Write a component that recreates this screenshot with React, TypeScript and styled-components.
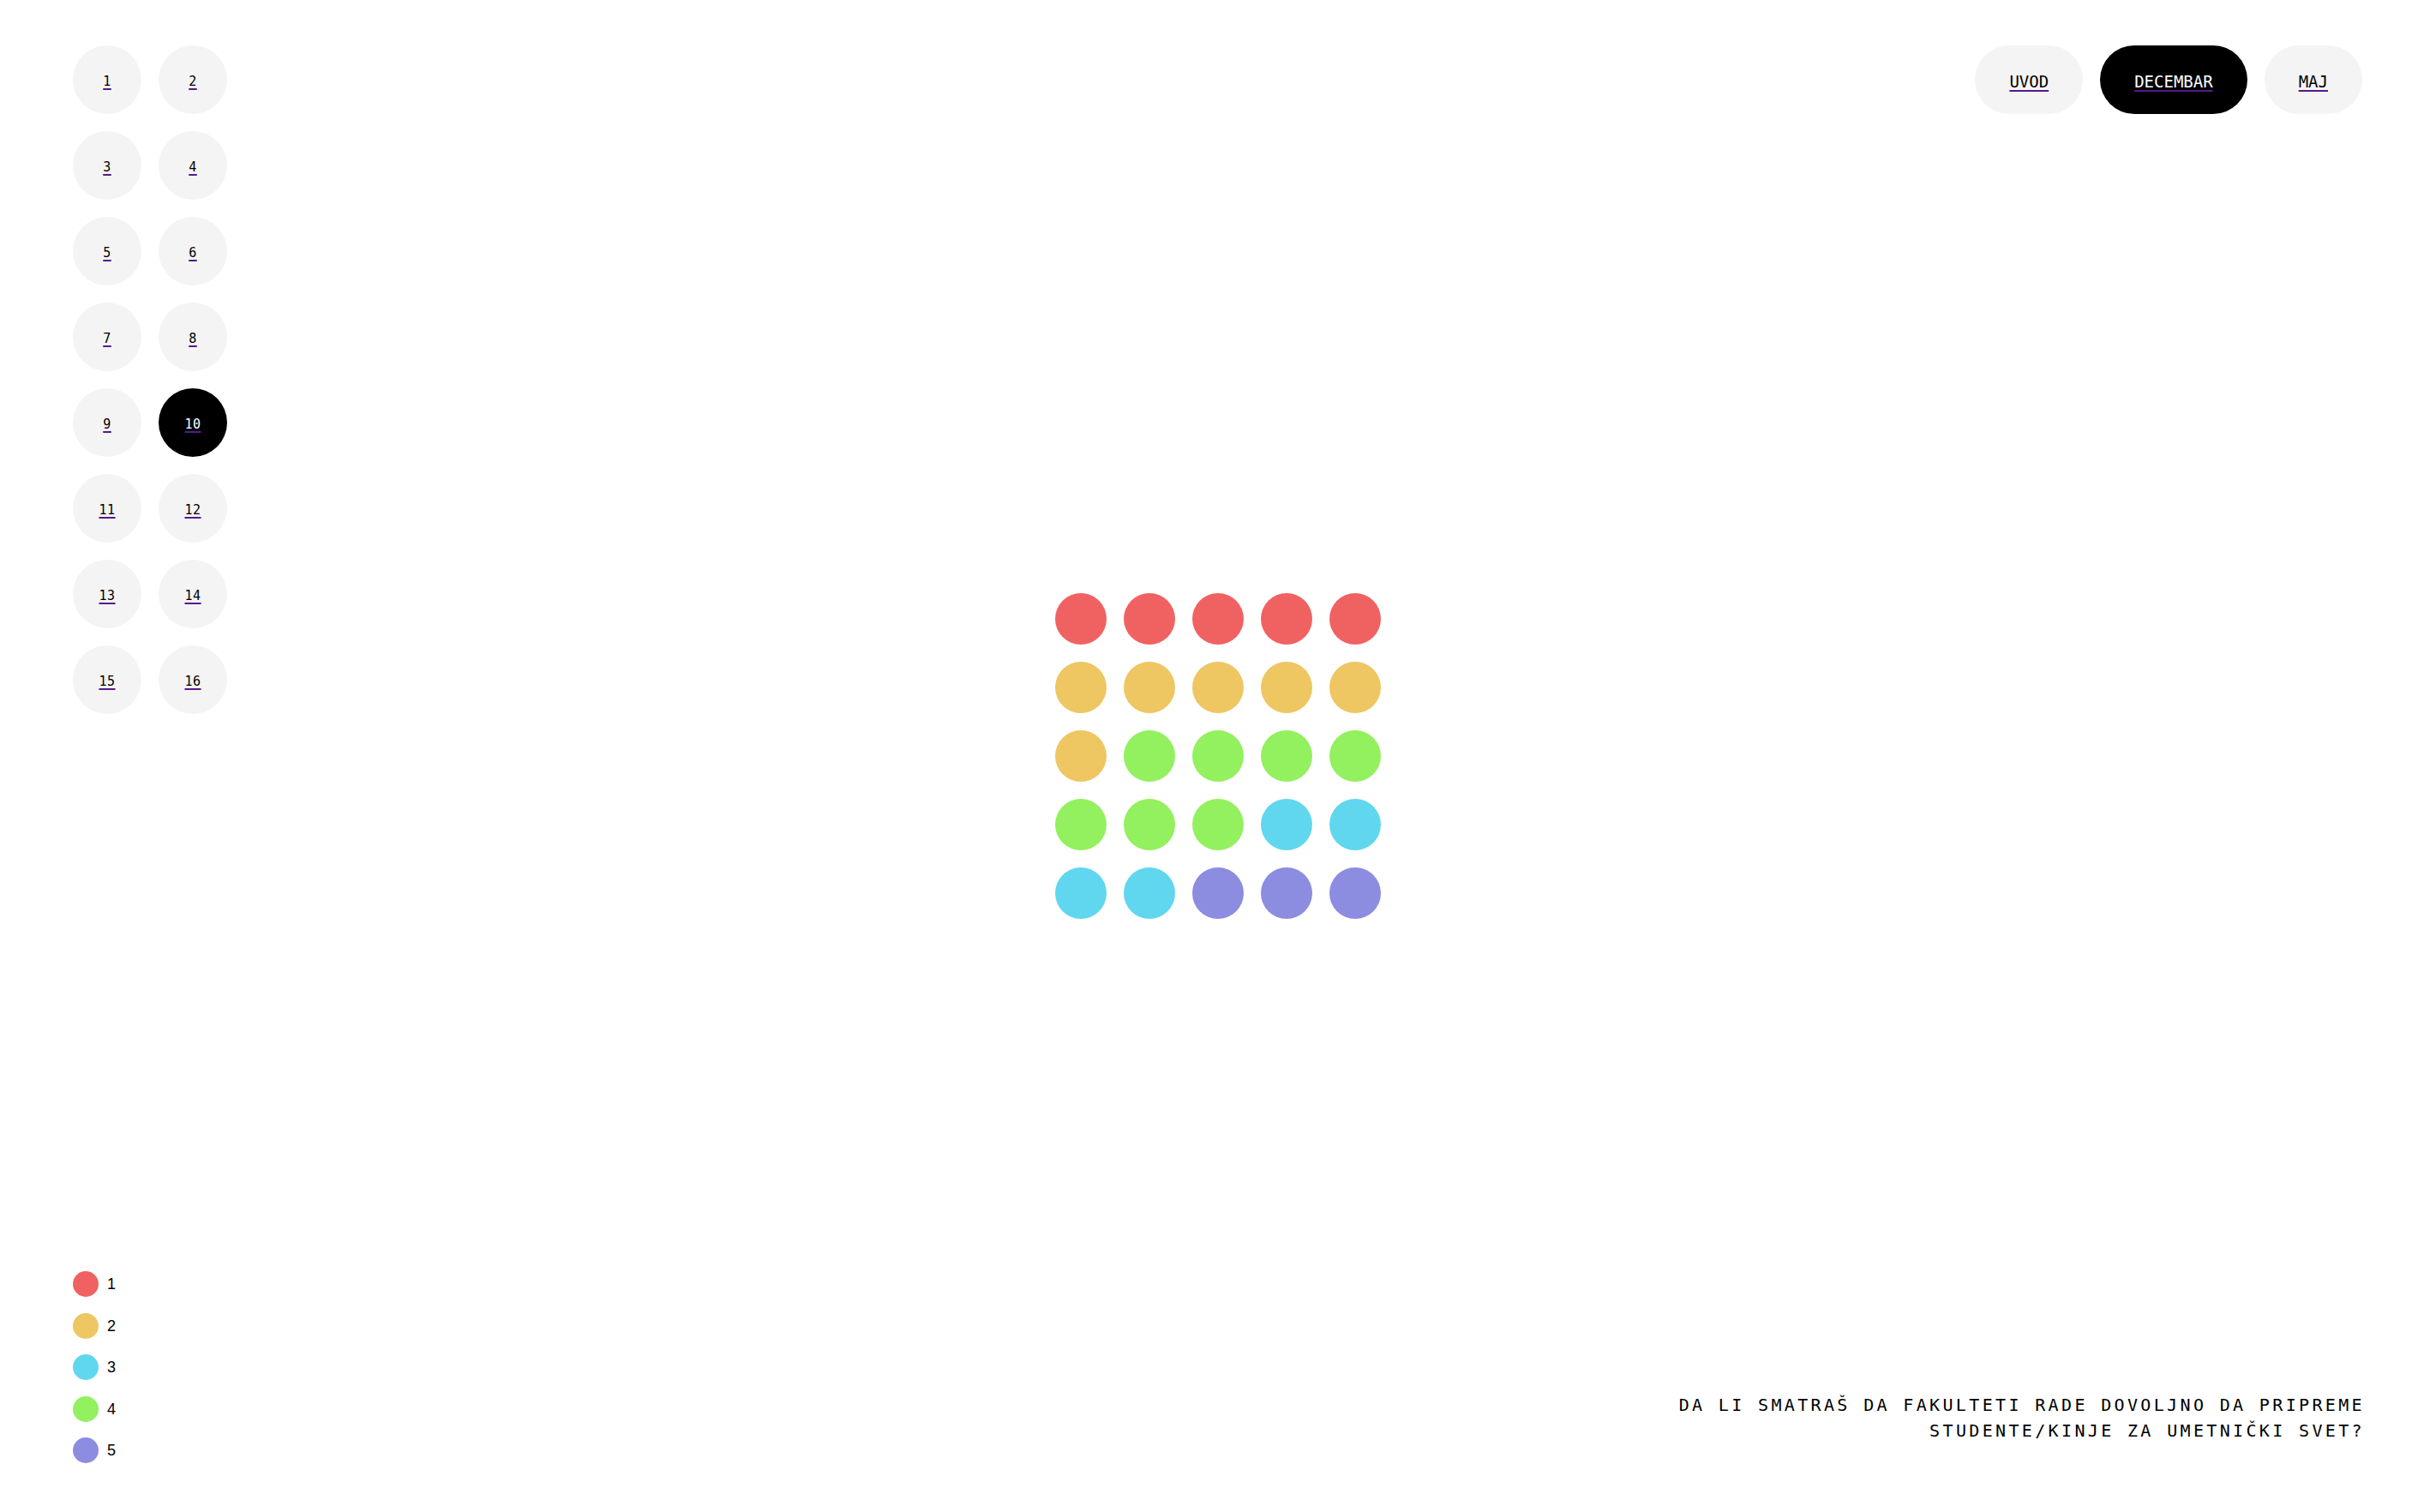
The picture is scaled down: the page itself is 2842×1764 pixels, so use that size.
import React from "react";
import styled, { createGlobalStyle } from "styled-components";

import type { FC } from "react";

const GlobalStyle = createGlobalStyle`
  html, body {
    margin: 0;
    padding: 0;
    background: #ffffff;
  }
  body {
    font-family: "DejaVu Sans Mono", "Liberation Mono", monospace;
    color: #000;
  }
`;

const COLORS: Record<number, string> = {
  1: "#f06261",
  2: "#eec662",
  3: "#60d7ee",
  4: "#93f05f",
  5: "#8c8ce1",
};

// answers as they are laid out in the chart
const ANSWERS = [
  1, 1, 1, 1, 1,
  2, 2, 2, 2, 2,
  2, 4, 4, 4, 4,
  4, 4, 4, 3, 3,
  3, 3, 5, 5, 5,
];

const QUESTIONS = Array.from({ length: 16 }, (_, i) => i + 1);
const PERIODS = ["UVOD", "DECEMBAR", "MAJ"];

const Page = styled.div`
  box-sizing: border-box;
  height: 100vh;
  padding: 53px 86px 57px 85px;
  display: grid;
  grid-template-columns: minmax(0, 1fr) auto minmax(0, 1fr);
  grid-template-rows: minmax(0, 1fr) auto minmax(0, 1fr);
`;

const QuestionNav = styled.nav`
  grid-column: 1;
  grid-row: 1 / span 2;
  align-self: start;
  justify-self: start;
  display: grid;
  grid-template-columns: repeat(2, 80px);
  grid-auto-rows: 80px;
  gap: 20px;
`;

const NavCircle = styled.a<{ $active?: boolean }>`
  box-sizing: border-box;
  display: flex;
  align-items: center;
  justify-content: center;
  padding-top: 3px;
  border-radius: 50%;
  background: ${(p) => (p.$active ? "#000" : "#f4f4f4")};
  color: ${(p) => (p.$active ? "#fff" : "#000")};
  font-family: "DejaVu Sans Mono", monospace;
  font-size: 15px;
  letter-spacing: 0.5px;
  text-decoration: underline;
  text-decoration-color: #551a8b;
  text-decoration-thickness: 2px;
  text-underline-offset: 3px;
  cursor: pointer;
`;

const PeriodTabs = styled.div`
  grid-column: 3;
  grid-row: 1;
  align-self: start;
  justify-self: end;
  display: flex;
  gap: 20px;
`;

const PeriodTab = styled.a<{ $active?: boolean }>`
  box-sizing: border-box;
  display: flex;
  align-items: center;
  height: 80px;
  padding: 3px 40px 0;
  border-radius: 40px;
  background: ${(p) => (p.$active ? "#000" : "#f4f4f4")};
  color: ${(p) => (p.$active ? "#fff" : "#000")};
  font-family: "DejaVu Sans Mono", monospace;
  font-size: 19px;
  text-decoration: underline;
  text-decoration-color: #551a8b;
  text-decoration-thickness: 2px;
  text-underline-offset: 3px;
  cursor: pointer;
`;

const DotChart = styled.div`
  grid-column: 2;
  grid-row: 2;
  margin-top: 4px;
  display: grid;
  grid-template-columns: repeat(5, 60px);
  grid-auto-rows: 60px;
  gap: 20px;
`;

const Dot = styled.span<{ $color: string; $size: number }>`
  display: block;
  width: ${(p) => p.$size}px;
  height: ${(p) => p.$size}px;
  border-radius: 50%;
  background: ${(p) => p.$color};
  flex-shrink: 0;
`;

const Legend = styled.ul`
  grid-column: 1;
  grid-row: 3;
  align-self: end;
  justify-self: start;
  list-style: none;
  margin: 0;
  padding: 0;
  display: flex;
  flex-direction: column;
  gap: 18.5px;
`;

const LegendItem = styled.li`
  display: flex;
  align-items: center;
  gap: 10px;
  font-family: "Liberation Sans", Arial, sans-serif;
  font-size: 18px;
  line-height: 30px;
`;

const Question = styled.p`
  grid-column: 3;
  grid-row: 3;
  align-self: end;
  justify-self: end;
  margin: 0 -3px 23px 0;
  max-width: 830px;
  text-align: right;
  font-family: "DejaVu Sans Mono", monospace;
  font-size: 20px;
  line-height: 30px;
  letter-spacing: 3.35px;
  text-transform: uppercase;
`;

const App: FC = () => {
  const current = 10;
  const period = "DECEMBAR";

  return (
    <>
      <GlobalStyle />
      <Page>
        <QuestionNav>
          {QUESTIONS.map((q) => (
            <NavCircle key={q} $active={q === current}>
              {q}
            </NavCircle>
          ))}
        </QuestionNav>

        <PeriodTabs>
          {PERIODS.map((p) => (
            <PeriodTab key={p} $active={p === period}>
              {p}
            </PeriodTab>
          ))}
        </PeriodTabs>

        <DotChart>
          {ANSWERS.map((a, i) => (
            <Dot key={i} $color={COLORS[a]} $size={60} />
          ))}
        </DotChart>

        <Legend>
          {[1, 2, 3, 4, 5].map((n) => (
            <LegendItem key={n}>
              <Dot $color={COLORS[n]} $size={30} />
              {n}
            </LegendItem>
          ))}
        </Legend>

        <Question>
          Da li smatraš da fakulteti rade dovoljno da pripreme
          studente/kinje za umetnički svet?
        </Question>
      </Page>
    </>
  );
};

export default App;
